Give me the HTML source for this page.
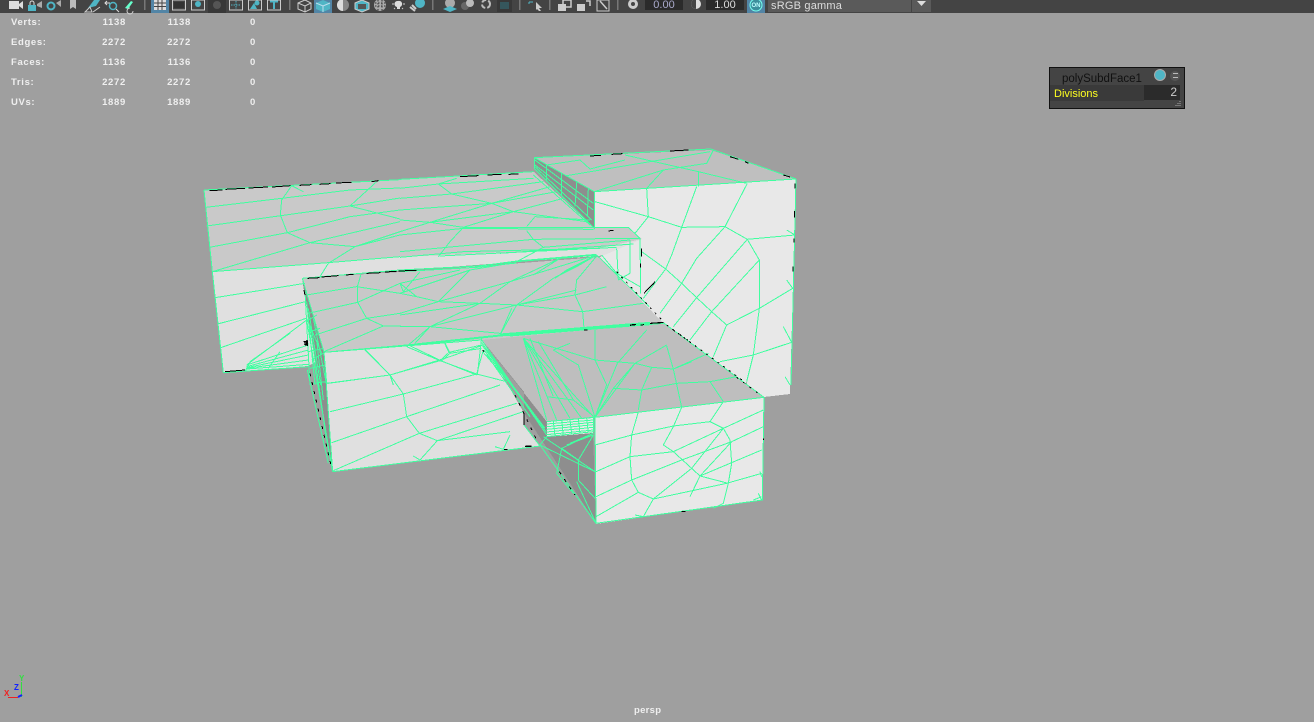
<!DOCTYPE html>
<html><head><meta charset="utf-8"><style>
html,body{margin:0;padding:0;width:1314px;height:722px;overflow:hidden;background:#9f9f9f;font-family:"Liberation Sans",sans-serif}
.a{position:absolute;white-space:nowrap}
.s{font-weight:bold;font-size:9.5px;color:#efefef;line-height:12px;letter-spacing:.65px}
.r{text-align:right;width:40px;letter-spacing:.7px}
svg{position:absolute;left:0;top:0}
</style></head><body>
<svg width="1314" height="722" viewBox="0 0 1314 722">
<rect width="1314" height="722" fill="#9f9f9f"/>
<g shape-rendering="crispEdges">
<polygon fill="#e0e0e0" points="212,272 400,257 600,248 642,239 610,255 302,278 320,360 308,366 223,373"/>
<polygon fill="#c9c9c9" points="204,190 534,172 594,228 628,228 642,239 600,248 400,257 212,272"/>
<polygon fill="#e8e8e8" points="594,192 796,179 790,394 764,397 663,323 600,257 642,239 628,228 594,228"/>
<polygon fill="#bfbfbf" points="534,158 711,150 796,179 594,192"/>
<polygon fill="#8e8e8e" points="534,158 594,192 594,228 534,168"/>
<polygon fill="#c8c8c8" points="302,278 417,271 600,257 663,323 482,340 324,352"/>
<polygon fill="#e0e0e0" points="324,352 482,340 524,413 524,425 540,446 333,472"/>
<polygon fill="#8e8e8e" points="302,278 324,352 333,472"/>
<polygon fill="#bebebe" points="482,340 663,323 764,397 595,417 547,422"/>
<polygon fill="#8e8e8e" points="482,340 547,422 547,437 593,433 596,523 524,413 524,392"/>
<polygon fill="#e8e8e8" points="547,422 593,417 593,433 547,437"/>
<polygon fill="#e8e8e8" points="595,417 764,397 762,500 596,524"/>
</g>
<g fill="none" stroke="#40ffa0" stroke-width="1" shape-rendering="crispEdges">
<!-- zoom4: left portion -->
<g transform="translate(200,145) scale(.33333)">
<path vector-effect="non-scaling-stroke" d="M12,135 L600,104 M12,135 L37,380 L70,683 L325,665 M37,380 L385,353 L600,335 M17,187 L245,160 L450,135 L600,129 M20,243 L243,212 L450,183 L600,159 M28,307 L262,263 L450,215 L600,195 M37,380 L330,293 L600,230 M275,122 L245,165 L241,210 L262,263 L330,293 L465,305 L600,270 M530,110 L450,183 L600,222 M275,122 L310,140 M465,305 L600,260 M465,305 L385,355 L360,395"/>
<path vector-effect="non-scaling-stroke" d="M45,458 L315,415 M52,537 L316,470 M62,608 L318,520 M140,660 L320,525 M140,660 L325,600 M140,665 L325,615 M140,668 L325,630 M140,670 L325,645 M140,672 L325,658 M135,680 L145,660 M205,670 L240,620 M150,650 L270,565"/>
<path vector-effect="non-scaling-stroke" d="M307,400 L600,375 M307,400 L372,622 L620,600 L845,578 M372,622 L380,715 M483,388 L472,425 L472,470 L500,520 L550,543 L690,545 M320,450 L470,425 L600,445 M325,505 L473,472 L600,415 M345,570 L500,520 L600,505 M372,620 L550,543 M625,600 L690,545 M660,380 L610,440 L600,415"/>
<path vector-effect="non-scaling-stroke" d="M380,715 L570,690 L735,640 L850,600 M495,615 L570,690 L580,720 M625,600 L725,648 L830,690 M735,595 L750,625 L725,648 M750,625 L845,610 M845,578 L832,690"/>
<path vector-effect="non-scaling-stroke" d="M315,440 L330,720 M320,470 L345,720 M325,490 L362,720 M340,520 L380,720 M320,520 L365,625 M318,530 L350,510 M330,560 L360,550 M325,620 L370,610 M330,670 L375,660"/>
</g>
<!-- central zoom -->
<g transform="translate(400,170) scale(.33333)">
<path vector-effect="non-scaling-stroke" d="M0,28 L400,5 M0,55 L115,42 L400,25 M0,85 L155,72 L430,35 M0,120 L275,100 L450,50 M0,150 L90,157 L190,172 M115,42 L155,72 L275,100 L340,125 L560,155 M0,185 L90,157 L340,125 L490,85 M90,157 L275,100 L470,65 M190,172 L340,125 M380,170 L405,140 L570,150 M170,25 L115,42 M400,15 L570,165 M0,195 L190,175"/>
<path vector-effect="non-scaling-stroke" d="M0,262 L190,245 L600,235 M190,172 L685,172 L720,205 L722,370 M190,175 L580,178 M190,172 L150,215 L115,260 M0,245 L400,208 L720,205 M400,208 L430,232 L350,275 M380,182 L400,208 M430,232 L690,210 M300,250 L700,222 M120,258 L650,232 M650,235 L655,330 M690,210 L690,310 M0,300 L230,288 L350,275 L590,255 M225,290 L350,273 L590,253 M0,305 L230,292 L350,279 M605,255 L650,310 L720,350 M590,255 L748,410 M690,310 L655,330"/>
<path vector-effect="non-scaling-stroke" d="M590,258 L530,330 L525,375 L548,425 L552,475 M590,255 L460,325 L350,405 L300,495 M590,255 L330,335 L240,400 L90,470 L45,520 M590,255 L480,265 L400,315 M590,255 L500,300 L465,325 M590,255 L530,290 L470,320 M480,265 L330,335 L115,395 L0,430 M210,300 L115,395 M0,340 L50,380 L115,395 L240,400 L350,405 L525,375 L620,350 M0,370 L210,300 L330,280 M0,340 L180,300 M0,435 L240,400 M0,470 L90,470 L300,490 M90,470 L350,405 L530,360 M350,405 L548,425 L730,400 M300,495 L335,415 M45,522 L300,495 L750,460 M45,525 L300,498 L750,464 M300,492 L750,457 M0,370 L50,380"/>
</g>
<!-- zoom5: top block + right face -->
<g transform="translate(500,145) scale(.33333)">
<path vector-effect="non-scaling-stroke" d="M103,38 L632,12 L888,102 L283,140 L103,38 M103,38 L103,70 L283,250 L283,140 M888,102 L873,720 M595,125 L595,80 L375,30 M283,140 L490,75 L620,55 L640,15 M200,92 L420,55 L630,20 M140,60 L240,45 L270,72 L375,45 M595,80 L740,115 M490,75 L440,130"/>
<path vector-effect="non-scaling-stroke" d="M140,60 L140,110 M185,85 L185,155 M230,112 L225,185 M265,130 L262,215 M105,45 L280,175 M105,60 L280,195 M105,65 L275,225"/>
<path vector-effect="non-scaling-stroke" d="M285,170 L445,215 L545,247 L675,245 L742,283 L778,345 L778,490 L760,630 L740,710 M440,130 L445,215 L405,265 M590,125 L545,247 L515,330 L497,372 L545,415 L590,458 L635,500 L680,540 L640,635 M742,115 L675,245 L590,340 L545,415 L480,505 M742,283 L590,458 L520,545 M778,345 L635,500 L570,585 M742,283 L885,270 M860,255 L885,270 M680,540 L778,490 L878,430 M860,405 L878,430 M660,650 L760,630 L875,592 M850,545 L875,592 M855,695 L870,720 M497,372 L425,320 M497,372 L430,460"/>
</g>
<!-- zoom6 -->
<g transform="translate(300,320) scale(.33333)">
<path vector-effect="non-scaling-stroke" d="M72,97 L545,60 M98,455 L720,378 M72,97 L98,455 M20,0 L98,455 M195,88 L270,165 L310,222 L320,290 L358,340 L412,362 L360,420 M340,408 L360,420 M85,190 L270,165 L420,122 L530,162 L620,185 M320,80 L420,122 L447,97 L433,68 M447,97 L545,75 M90,275 L310,222 L530,162 L550,90 M95,368 L320,290 L600,195 M100,452 L358,340 L650,250 M412,362 L670,275 M630,345 L610,388 L585,380 M672,300 L672,315 L720,378 M412,362 L630,335"/>
<path vector-effect="non-scaling-stroke" d="M30,20 L50,150 L75,330 L95,440 M50,60 L70,240 M22,150 L85,430 M35,120 L70,100 M40,190 L78,185"/>
<path vector-effect="non-scaling-stroke" d="M545,60 L740,345 M545,68 L738,335 M548,78 L735,325 M552,90 L730,320 M560,104 L690,290 M548,95 L625,185"/>
</g>
<!-- zoom7 -->
<g transform="translate(510,320) scale(.33333)">
<path vector-effect="non-scaling-stroke" d="M0,45 L460,8 M0,48 L460,10 M460,8 L762,232 L255,292 L110,305 M40,55 L255,120 L375,130 L425,142 L490,147 L595,100 M255,292 L322,130 L410,30 M255,292 L375,130 L470,75 M255,292 L290,195 L255,120 L255,30 M255,292 L205,135 L130,90 M425,142 L395,210 L385,270 M490,147 L515,262 M255,292 L310,205 L395,210 L500,190 L600,185 L680,170 M600,185 L640,245 M470,78 L490,147 L545,125 M375,130 L310,205 M40,55 L110,300 M40,55 L140,300 M40,55 L180,295 M40,55 L215,295 M40,55 L250,290 M60,55 L130,230 M85,65 L190,240 L255,292 M110,230 L190,240 M130,90 L180,70"/>
<path vector-effect="non-scaling-stroke" d="M110,305 L250,292 L250,335 L110,350 M110,312 L250,300 M110,320 L250,307 M110,328 L250,314 M110,336 L250,322 M110,344 L250,330 M130,303 L135,348 M155,300 L160,345 M180,298 L185,343 M205,296 L210,340 M230,294 L235,337"/>
<path vector-effect="non-scaling-stroke" d="M255,292 L258,610 L757,540 L762,232 M90,375 L255,455 M155,385 L205,420 L205,480 L255,535 M250,340 L155,385 L140,460 L190,520 M205,420 L250,345 M100,350 L255,455 M200,485 L258,610 M90,375 L258,610 M110,350 L90,375 M170,375 L250,345 M180,370 L250,340"/>
<path vector-effect="non-scaling-stroke" d="M255,375 L365,345 L490,318 L600,305 L640,325 L660,360 L665,430 L655,490 M385,275 L365,345 L360,410 L365,480 L385,517 L430,537 L545,445 L640,325 M515,262 L490,320 L460,375 L490,395 L545,445 L570,468 L655,490 M258,455 L360,410 L490,395 L640,325 L760,270 M258,530 L365,480 L515,420 L665,365 L760,320 M385,517 L258,590 M400,590 L430,537 M540,530 L570,468 L665,365 M430,537 L650,490 L755,460 M570,468 L755,390 M655,490 L640,550 L610,565 M640,245 L600,305 M375,585 L400,590 M730,540 L755,530 M745,520 L755,540 M750,455 L755,470"/>
</g>
</g>
<!-- black dashes -->
<g fill="none" stroke="#000" stroke-width="1" shape-rendering="crispEdges">
<g transform="translate(200,145) scale(.33333)">
<path vector-effect="non-scaling-stroke" d="M28,137 L68,135 M76,133 L135,130 M146,129 L204,126 M216,126 L272,122 M298,121 L335,119 M358,118 L392,116 M408,114 L455,112 M515,110 L535,107 M780,95 L835,92 M862,90 L905,88 M925,88 L955,87 M322,400 L358,398 M365,396 L415,392 M438,390 L460,388 M500,385 L542,383 M555,381 L590,379 M595,378 L650,376 M312,435 L315,450 M75,680 L135,675 M310,590 L322,590 M312,595 L322,585"/>
</g>
<g transform="translate(500,145) scale(.33333)">
<path vector-effect="non-scaling-stroke" d="M270,33 L303,31 M335,28 L368,26 M510,18 L565,15 M690,35 L715,43 M735,50 L745,55 M850,90 L870,96 M885,115 L885,130 M884,198 L884,218 M882,280 L882,292 M879,365 L879,380 M325,258 L340,256 M425,310 L425,335 M422,355 L422,368 M432,445 L465,410 M436,440 L462,415 M390,540 L408,538 M450,535 L490,532"/>
<path vector-effect="non-scaling-stroke" stroke-dasharray="2 5" d="M350,380 L490,530 M500,540 L740,715"/>
</g>
<g transform="translate(300,320) scale(.33333)">
<path vector-effect="non-scaling-stroke" stroke-dasharray="3 6" d="M30,160 L95,445 M645,225 L715,370 M778,455 L825,525"/>
<path vector-effect="non-scaling-stroke" d="M548,90 L552,95 M672,280 L672,315 M676,378 L695,378 M612,388 L622,388"/>
</g>
<g transform="translate(510,320) scale(.33333)">
<path vector-effect="non-scaling-stroke" d="M222,30 L232,30 M360,16 L375,15 M392,15 L402,14 M423,10 L455,8 M45,380 L65,380 M515,575 L527,574 M760,355 L760,360"/>
<path vector-effect="non-scaling-stroke" stroke-dasharray="2 6" d="M490,30 L540,65 M680,172 L755,228"/>
</g>
<polygon points="304,345 308,340 308,346" fill="#000" stroke="none"/>
</g>
<!-- toolbar -->
<rect width="1314" height="13" fill="#444"/>
<g>
<rect x="9" y="1" width="10" height="8" fill="#ddd"/><polygon points="19,4 23,1 23,9 19,6" fill="#ddd"/>
<rect x="28" y="5" width="8" height="6" fill="#4fb5c5"/><path d="M30,5 V3 a2,2 0 0 1 4,0 V5" fill="none" stroke="#ddd" stroke-width="1"/><polygon points="37,4 42,1 42,8 37,6" fill="#aaa"/>
<circle cx="51" cy="6" r="3.5" fill="none" stroke="#4fb5c5" stroke-width="2"/><polygon points="56,3 61,0 61,7" fill="#aaa"/>
<polygon points="70,0 76,0 76,9 73,7 70,9" fill="#bbb"/>
<polygon points="88,8 94,0 100,0 96,6" fill="#4fb5c5"/><path d="M85,12 L90,7 L92,12 Z M93,12 L100,7" fill="none" stroke="#ccc"/>
<circle cx="113" cy="6" r="3.5" fill="none" stroke="#4fb5c5" stroke-width="1.5"/><path d="M116,9 L119,12 M105,3 H110 M107,1 L105,3 L107,5" fill="none" stroke="#ddd"/>
<path d="M125,8 L131,1 L133,2 L128,9 Z" fill="#6fc"/><path d="M130,8 a3,3 0 1 0 3,3" fill="none" stroke="#ccc"/>
<rect x="144" y="0" width="1.5" height="10" fill="#777"/>
<rect x="151" y="0" width="18" height="13" fill="#5285a6"/>
<rect x="154" y="0" width="12" height="10" fill="#ddd"/><path d="M158,0 V10 M162,0 V10 M154,3 H166 M154,6.500 H166" stroke="#444" stroke-width="1"/>
<rect x="172.500" y="0" width="13" height="10" fill="none" stroke="#ccc"/><rect x="174" y="2" width="10" height="6" fill="#333"/>
<rect x="191.500" y="0" width="13" height="10" fill="none" stroke="#ccc"/><circle cx="198" cy="4" r="3" fill="#4fb5c5"/>
<rect x="208" y="0" width="18" height="13" fill="#383838"/><circle cx="217" cy="5" r="4" fill="#555"/>
<rect x="229.500" y="0" width="13" height="10" fill="none" stroke="#ccc"/><path d="M231,5 H241 M236,1 V9" stroke="#4fb5c5" stroke-dasharray="1.500 1"/>
<rect x="248.500" y="0" width="13" height="10" fill="none" stroke="#ccc"/><polygon points="250,9 254,3 257,9" fill="#4fb5c5"/><circle cx="257" cy="3" r="2.500" fill="#4fb5c5"/>
<rect x="267.500" y="0" width="13" height="10" fill="none" stroke="#ccc"/><path d="M270,1.500 H278 M274,1 V9" stroke="#4fb5c5" stroke-width="2"/>
<rect x="289" y="0" width="1.500" height="10" fill="#777"/>
<path d="M298,3 L305,0 L311,3 V9 L305,12 L298,9 Z M298,3 L305,6 L311,3 M305,6 V12" fill="none" stroke="#ccc"/>
<rect x="314" y="0" width="18" height="13" fill="#5285a6"/>
<path d="M316,3 L323,0 L330,3 V9 L323,12 L316,9 Z" fill="#4fb5c5"/><path d="M316,3 L323,6 L330,3 M323,6 V12" fill="none" stroke="#bde"/>
<circle cx="343" cy="5" r="6" fill="#888"/><path d="M343,-1 A6,6 0 0 0 343,11 Z" fill="#ddd"/>
<path d="M355,3 L362,0 L369,3 V9 L362,12 L355,9 Z" fill="#4fb5c5" stroke="#ccc"/><rect x="358" y="4" width="8" height="5" fill="#555"/>
<circle cx="380" cy="5" r="6" fill="#aaa"/><path d="M375,3 H386 M375,6 H386 M378,0 V11 M382,0 V11" stroke="#333" stroke-dasharray="1.500 1.500"/>
<path d="M398,1 a3,3 0 0 1 2,6 V9 H397 V7 a3,3 0 0 1 1,-6 Z" fill="#ddd"/><path d="M392,4 H394 M403,4 H405 M394,9 L395,8 M403,9 L402,8" stroke="#ccc"/>
<circle cx="420" cy="3" r="5" fill="#4fb5c5"/><path d="M410,7 L415,11 M412,5 L416,9" stroke="#ccc" stroke-width="2"/>
<rect x="432" y="0" width="1.500" height="10" fill="#777"/>
<circle cx="450" cy="3" r="5" fill="#aaa"/><path d="M443,9 L450,6 L457,9 L450,12 Z" fill="#4fb5c5"/>
<circle cx="465" cy="6" r="4" fill="#666"/><circle cx="470" cy="3" r="4" fill="#bbb"/>
<circle cx="486" cy="4" r="4" fill="none" stroke="#bbb" stroke-width="2" stroke-dasharray="5 2"/>
<rect x="497" y="0" width="15" height="12" fill="#383838"/><rect x="500" y="2" width="9" height="7" fill="#35565c"/>
<rect x="519" y="0" width="1.500" height="10" fill="#777"/>
<path d="M529,2 V4 M529,2 H533" stroke="#4fb5c5" fill="none"/><polygon points="536,2 542,8 539,8 541,11 539,11 537,9 536,10" fill="#ccc"/>
<rect x="549" y="0" width="1.500" height="10" fill="#777"/>
<rect x="558" y="4" width="8" height="7" fill="#ccc"/><rect x="563" y="0" width="8" height="7" fill="none" stroke="#ccc" stroke-width="1.500"/>
<rect x="577" y="4" width="8" height="7" fill="#ccc"/><path d="M586,1 H590 V6" fill="none" stroke="#ccc" stroke-width="1.500"/>
<rect x="597" y="0" width="12" height="11" fill="none" stroke="#ccc"/><path d="M600,1 L607,9" stroke="#ccc" stroke-width="1.500"/>
<rect x="617" y="0" width="1.500" height="10" fill="#777"/>
<circle cx="633" cy="4" r="5" fill="#ccc"/><circle cx="633" cy="4" r="2" fill="#444"/>
<rect x="645" y="0" width="38" height="10" fill="#2b2b2b"/>
<rect x="706" y="0" width="38" height="10" fill="#2b2b2b"/>
<circle cx="696" cy="4" r="5" fill="#ddd"/><path d="M696,-1 A5,5 0 0 0 696,9 Z" fill="#444"/>
<rect x="747" y="0" width="18" height="13" fill="#5285a6"/>
<circle cx="756" cy="5" r="6" fill="#3c8f9c" stroke="#7fe" stroke-width="1"/>
<text x="756" y="7" font-size="6" font-weight="bold" fill="#bff" text-anchor="middle" font-family="Liberation Sans, sans-serif">ON</text>
<rect x="768" y="0" width="143" height="12" fill="#5a5a5a"/>
<rect x="912" y="0" width="19" height="12" fill="#5a5a5a"/>
<polygon points="917,1 926,1 921.500,6" fill="#ddd"/>
<text x="664" y="8" font-size="11" fill="#aac" text-anchor="middle" font-family="Liberation Sans, sans-serif">0.00</text>
<text x="725" y="8" font-size="11" fill="#ddd" text-anchor="middle" font-family="Liberation Sans, sans-serif">1.00</text>
<text x="771" y="9" font-size="11" fill="#ddd" letter-spacing=".2" font-family="Liberation Sans, sans-serif">sRGB gamma</text>
</g>
<!-- axes -->
<path d="M21.500,682 V697" stroke="#30e040" fill="none"/>
<path d="M8,697.500 H18" stroke="#f02020" fill="none"/>
<path d="M18,697 L22,695" stroke="#1020ff" fill="none" stroke-width="2"/>
<text x="19" y="681" font-size="8" font-weight="bold" fill="#30e040" font-family="Liberation Sans, sans-serif">Y</text>
<text x="14" y="690" font-size="8" font-weight="bold" fill="#1020ff" font-family="Liberation Sans, sans-serif">Z</text>
<text x="4" y="696" font-size="8" font-weight="bold" fill="#f02020" font-family="Liberation Sans, sans-serif">X</text>
</svg>
<div class="a s" style="left:11px;top:17px">Verts:</div>
<div class="a s" style="left:11px;top:37px">Edges:</div>
<div class="a s" style="left:11px;top:57px">Faces:</div>
<div class="a s" style="left:11px;top:77px">Tris:</div>
<div class="a s" style="left:11px;top:97px">UVs:</div>
<div class="a s r" style="left:86px;top:17px">1138</div><div class="a s r" style="left:151px;top:17px">1138</div><div class="a s r" style="left:216px;top:17px">0</div>
<div class="a s r" style="left:86px;top:37px">2272</div><div class="a s r" style="left:151px;top:37px">2272</div><div class="a s r" style="left:216px;top:37px">0</div>
<div class="a s r" style="left:86px;top:57px">1136</div><div class="a s r" style="left:151px;top:57px">1136</div><div class="a s r" style="left:216px;top:57px">0</div>
<div class="a s r" style="left:86px;top:77px">2272</div><div class="a s r" style="left:151px;top:77px">2272</div><div class="a s r" style="left:216px;top:77px">0</div>
<div class="a s r" style="left:86px;top:97px">1889</div><div class="a s r" style="left:151px;top:97px">1889</div><div class="a s r" style="left:216px;top:97px">0</div>
<div class="a s" style="left:634px;top:705px;letter-spacing:.3px">persp</div>
<!-- panel -->
<div class="a" style="left:1049px;top:67px;width:134px;height:40px;background:#444;border:1px solid #111">
  <div class="a" style="left:12px;top:4px;font-size:11.5px;line-height:14px;color:#111">polySubdFace1</div>
  <div class="a" style="left:104px;top:1px;width:12px;height:12px;border-radius:50%;background:#4fb5c5;border:1px solid #aaa;box-sizing:border-box"></div>
  <div class="a" style="left:120px;top:3px;width:10px;height:10px;border-radius:50%;background:#555"></div>
  <div class="a" style="left:123px;top:5px;width:5px;height:5px;border-top:1px solid #bbb;border-bottom:1px solid #bbb;box-sizing:border-box"></div>
  <div class="a" style="left:0;top:17px;width:94px;height:16px;background:#3a3a3a"></div>
  <div class="a" style="left:4px;top:19px;font-size:11px;line-height:14px;color:#ffff20">Divisions</div>
  <div class="a" style="left:94px;top:17px;width:36px;height:15px;background:#2b2b2b;color:#ccc;font-size:12px;line-height:15px;text-align:right"><span style="padding-right:3px">2</span></div>
  <svg width="8" height="8" style="left:124px;top:32px"><path d="M6,1 V2 M4,3 V4 M6,3 V4 M2,5 V6 M4,5 V6 M6,5 V6" stroke="#aaa"/></svg>
</div>
</body></html>
